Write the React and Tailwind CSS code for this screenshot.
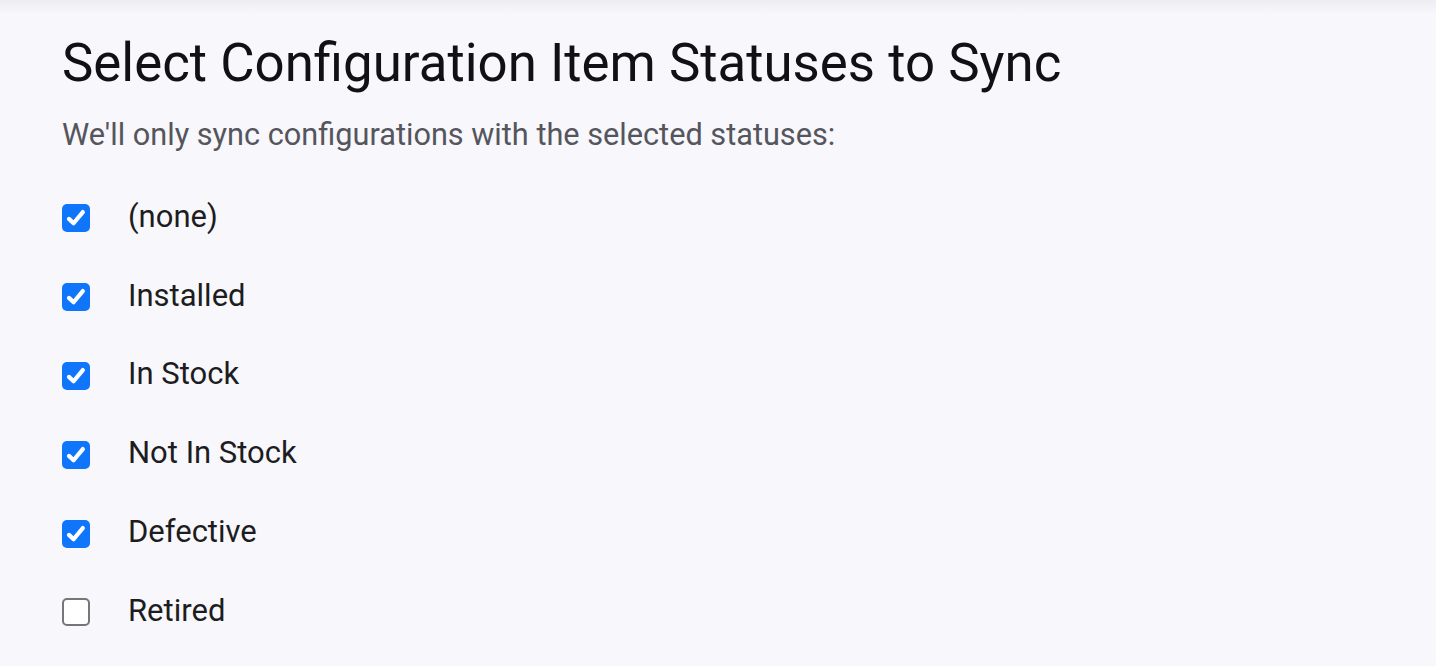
import React from "react";

const items = [
  { label: "(none)", checked: true },
  { label: "Installed", checked: true },
  { label: "In Stock", checked: true },
  { label: "Not In Stock", checked: true },
  { label: "Defective", checked: true },
  { label: "Retired", checked: false },
];

function Box({ checked }) {
  if (checked) {
    return (
      <span className="flex h-[28px] w-[28px] shrink-0 items-center justify-center rounded-[5px] bg-[#0f75fb]">
        <svg width="22" height="22" viewBox="0 0 20 20" fill="none">
          <path d="M3.6 10.8 L7.8 14.8 L16.2 4.6" stroke="white" strokeWidth="3.8" strokeLinecap="round" strokeLinejoin="round" />
        </svg>
      </span>
    );
  }
  return <span className="h-[28px] w-[28px] shrink-0 rounded-[5px] border-2 border-[#767676] bg-white" />;
}

export default function App() {
  return (
    <div className="relative min-h-[666px] w-full bg-[#f7f7fc]" style={{ fontFamily: "Roboto, 'Liberation Sans', sans-serif" }}>
      <div className="pointer-events-none absolute inset-x-0 top-0 h-[14px] bg-gradient-to-b from-[#ececf2] to-transparent" />
      <div className="pl-[62px] pt-[37px]">
        <h1 className="text-[52.8px] leading-[52.5px] font-normal text-[#111114]">Select Configuration Item Statuses to Sync</h1>
        <p className="mt-[30px] text-[30.7px] leading-[30.5px] text-[#55555c]">We'll only sync configurations with the selected statuses:</p>
        <div className="mt-[29px] flex flex-col">
          {items.map((it) => (
            <label key={it.label} className="flex h-[78.8px] items-center gap-[38px]">
              <Box checked={it.checked} />
              <span className="mb-[4px] text-[31px] leading-[31px] text-[#1d1d21]">{it.label}</span>
            </label>
          ))}
        </div>
      </div>
    </div>
  );
}
